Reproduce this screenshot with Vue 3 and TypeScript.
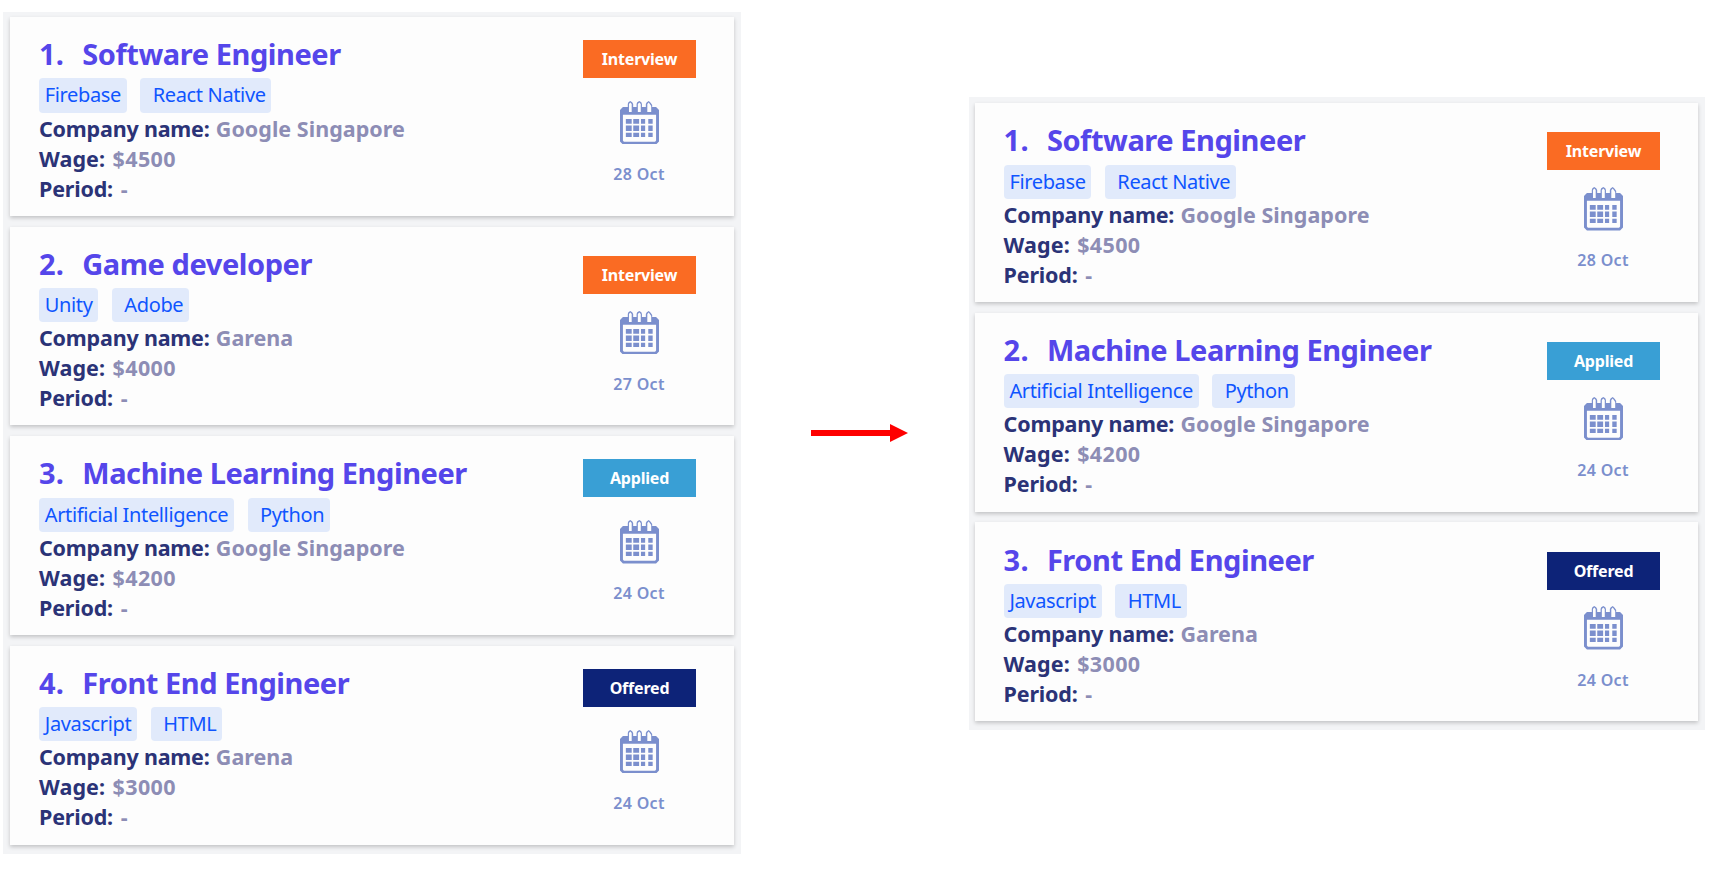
<script setup lang="ts">
type Status = 'Interview' | 'Applied' | 'Offered'

interface Job {
  title: string
  tags: string[]
  company: string
  wage: string
  period: string
  status: Status
  date: string
  raised?: boolean
}

const software: Job = {
  title: 'Software Engineer',
  tags: ['Firebase', 'React Native'],
  company: 'Google Singapore',
  wage: '$4500',
  period: '-',
  status: 'Interview',
  date: '28 Oct',
}
const game: Job = {
  title: 'Game developer',
  tags: ['Unity', 'Adobe'],
  company: 'Garena',
  wage: '$4000',
  period: '-',
  status: 'Interview',
  date: '27 Oct',
}
const learning: Job = {
  title: 'Machine Learning Engineer',
  tags: ['Artificial Intelligence', 'Python'],
  company: 'Google Singapore',
  wage: '$4200',
  period: '-',
  status: 'Applied',
  date: '24 Oct',
}
const frontEnd: Job = {
  title: 'Front End Engineer',
  tags: ['Javascript', 'HTML'],
  company: 'Garena',
  wage: '$3000',
  period: '-',
  status: 'Offered',
  date: '24 Oct',
}

const lists: { name: string; jobs: Job[] }[] = [
  {
    name: 'before',
    jobs: [
      { ...software, raised: true },
      game,
      { ...learning, raised: true },
      { ...frontEnd, raised: true },
    ],
  },
  { name: 'after', jobs: [software, learning, frontEnd] },
]
</script>

<template>
  <main class="board">
    <template v-for="(list, n) in lists" :key="list.name">
      <svg v-if="n === 1" class="arrow" width="97" height="18" viewBox="0 0 97 18">
        <path d="M0 6H79V0L97 9L79 18V12H0Z" fill="#fe0000" />
      </svg>
      <section class="list" :class="list.name">
        <article v-for="(job, i) in list.jobs" :key="job.title" class="card">
          <div class="info">
            <h2 class="title"><span class="number">{{ i + 1 }}.</span><span>{{ job.title }}</span></h2>
            <div class="tags">
              <span v-for="tag in job.tags" :key="tag" class="tag">{{ tag }}</span>
            </div>
            <p class="row"><span class="label">Company name:</span> <span class="company">{{ job.company }}</span></p>
            <p class="row"><span class="label wide">Wage:</span> <span class="wage">{{ job.wage }}</span></p>
            <p class="row"><span class="label">Period:</span> <span class="period">{{ job.period }}</span></p>
          </div>
          <div class="side">
            <div class="slot" :class="{ raised: job.raised }">
              <span class="badge" :class="job.status.toLowerCase()">{{ job.status }}</span>
            </div>
            <svg class="calendar" width="39" height="43.5" viewBox="0 0 40 44" preserveAspectRatio="none">
              <path
                fill="#7b8fcd"
                fill-rule="evenodd"
                d="M3 6H8V3Q8 1 10.5 0Q13 1 13.5 3V6H17V3Q17 1 19.8 0Q22.5 1 22.5 3V6H26.5V3Q27 1 29.5 0Q32 2 33 4V6H37L40 9V41L37 44H3L0 41V9ZM3 14V40L4 41.3H36L37 40V14ZM9.2 3V11.2H12V3L10.6 1.5ZM18.3 3V11.2H21.3V3L19.8 1.5ZM28 3V11.2H32V5L29.5 1.5Z"
              />
              <path
                fill="#7b8fcd"
                d="M6 18.3h6v4.7H6zM13.6 18.3h6v4.7h-6zM21.5 18.3h4.3v4.7h-4.3zM29 18.3h4.5v4.7H29zM6 24.8h6v5.6H6zM13.6 24.8h6v5.6h-6zM21.5 24.8h4.3v5.6h-4.3zM29 24.8h4.5v5.6H29zM6 32.2h6v4.3H6zM13.6 32.2h6v4.3h-6zM21.5 32.2h4.3v4.3h-4.3zM29 32.2h4.5v4.3H29z"
              />
            </svg>
            <time class="date">{{ job.date }}</time>
          </div>
        </article>
      </section>
    </template>
  </main>
</template>

<style>
body {
  background: #fff;
}
</style>

<style scoped>
.board {
  display: flex;
  align-items: flex-start;
  width: 1716px;
  height: 869px;
  box-sizing: border-box;
  padding-left: 3px;
  overflow: hidden;
  font-family: 'Noto Sans', 'Open Sans', sans-serif;
}
.list {
  display: flex;
  flex-direction: column;
  gap: 10.8px;
  box-sizing: border-box;
  background: #f3f4f6;
}
.before {
  width: 738px;
  height: 842px;
  margin-top: 12px;
  padding: 5px 7px 0 7.4px;
}
.after {
  width: 736px;
  height: 633px;
  margin-top: 97px;
  padding: 6.2px 7px 0 6px;
}
.arrow {
  margin: 424px 61px 0 70px;
}
.card {
  display: flex;
  justify-content: space-between;
  height: 198.8px;
  flex: none;
  box-sizing: border-box;
  padding: 19.2px 38px 0 28.6px;
  background: #fdfdfd;
  box-shadow: 0 2px 4px rgba(0, 0, 0, 0.2);
}
.info {
  white-space: nowrap;
}
.title {
  display: flex;
  margin: 0;
  height: 42.3px;
  line-height: 35px;
  font-size: 29px;
  font-weight: 700;
  letter-spacing: -0.44px;
  color: #5546ea;
}
.number {
  width: 43.3px;
  letter-spacing: 0.2px;
}
.tags {
  display: flex;
  gap: 13.7px;
  height: 34.2px;
  margin-bottom: 1px;
}
.tag {
  box-sizing: border-box;
  padding: 0 5.8px;
  border-radius: 4px;
  background: #e1eafb;
  font-size: 20px;
  line-height: 33.4px;
  letter-spacing: -0.36px;
  color: #0f55ff;
}
.tag + .tag {
  padding-left: 12.3px;
}
.row {
  margin: 0;
  font-size: 21.5px;
  line-height: 30px;
  font-weight: 700;
  letter-spacing: -0.2px;
  color: #8d8db5;
}
.label {
  color: #2b3377;
}
.wide {
  letter-spacing: 0.1px;
}
.company {
  margin-left: 0.8px;
  letter-spacing: 0.03px;
}
.wage {
  margin-left: 2px;
  letter-spacing: 0.35px;
}
.period {
  margin-left: 2.4px;
}
.side {
  display: flex;
  flex-direction: column;
  align-items: center;
  width: 113px;
  padding-top: 0.8px;
}
.slot {
  height: 64px;
  padding-top: 9.2px;
  box-sizing: border-box;
}
.slot.raised {
  padding-top: 2.8px;
}
.badge {
  display: block;
  width: 113px;
  height: 38px;
  line-height: 38px;
  text-align: center;
  font-size: 16px;
  font-weight: 700;
  letter-spacing: -0.2px;
  color: #fff;
}
.interview {
  background: #fa6b23;
}
.applied {
  background: #399fd5;
}
.offered {
  background: #0d2378;
}
.calendar {
  flex: none;
  margin-right: 0.6px;
}
.date {
  margin: 18.8px 1px 0 0;
  font-size: 16px;
  font-weight: 600;
  line-height: 22px;
  letter-spacing: 0.35px;
  color: #7b8fcd;
}
</style>
